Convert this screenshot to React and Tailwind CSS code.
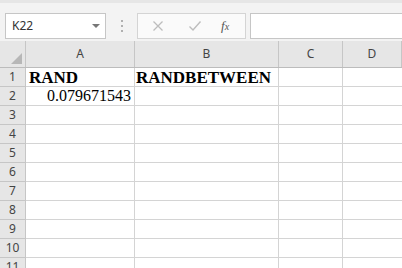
const cols = [
    { name: "A", w: "w-[109px]" },
    { name: "B", w: "w-[144px]" },
    { name: "C", w: "w-[64px]" },
    { name: "D", w: "flex-1" },
];

const rows = [
    { n: 1, a: "RAND", b: "RANDBETWEEN", bold: true },
    { n: 2, a: "0.079671543", b: "", num: true },
    { n: 3 }, { n: 4 }, { n: 5 }, { n: 6 }, { n: 7 }, { n: 8 }, { n: 9 }, { n: 10 }, { n: 11 },
];

const ui = { fontFamily: '"Noto Sans", "Open Sans", sans-serif' };
const serif = { fontFamily: '"Liberation Serif", "DejaVu Serif", serif' };

export default function App() {
    return (
        <div className="w-[402px] h-[268px] overflow-hidden bg-white" style={ui}>
            {/* formula bar */}
            <div className="h-[41px] bg-[#f3f3f3] border-t-[3px] border-t-[#e6e6e6] flex items-start pt-[10px]">
                <div className="ml-[5px] w-[101px] h-[26px] bg-white border border-[#c6c6c6] flex items-center pl-[6px] pr-[5px]">
                    <span className="text-[12px] text-[#333] flex-1">K22</span>
                    <span className="w-0 h-0 border-l-[4px] border-r-[4px] border-t-[4px] border-l-transparent border-r-transparent border-t-[#777]" />
                </div>
                <div className="w-[31px] h-[26px] flex flex-col items-center justify-center gap-[3px]">
                    <span className="w-[2px] h-[2px] bg-[#b0b0b0]" />
                    <span className="w-[2px] h-[2px] bg-[#b0b0b0]" />
                    <span className="w-[2px] h-[2px] bg-[#b0b0b0]" />
                </div>
                <div className="w-[109px] h-[26px] bg-[#fafafa] border border-[#d4d4d4] flex items-center">
                    <svg width="12" height="12" viewBox="0 0 12 12" className="ml-[14px]">
                        <path d="M1.5 1.5 L10.5 10.5 M10.5 1.5 L1.5 10.5" stroke="#bdbdbd" strokeWidth="1.3" fill="none" />
                    </svg>
                    <svg width="14" height="12" viewBox="0 0 14 12" className="ml-[24px]">
                        <path d="M1.5 6.5 L5 10 L12.5 1.5" stroke="#bdbdbd" strokeWidth="1.4" fill="none" />
                    </svg>
                    <span className="ml-[19px] text-[13px] italic text-[#555]" style={serif}>f<span className="text-[10px]">x</span></span>
                </div>
                <div className="ml-[4px] flex-1 h-[26px] bg-white border border-[#c6c6c6] border-r-0" />
            </div>

            {/* column headers */}
            <div className="flex h-[27px] bg-[#e6e6e6] border-b border-[#bcbcbc]">
                <div className="w-[26px] border-r border-[#c6c6c6] flex items-end justify-end pr-[3px] pb-[3px]">
                    <svg width="11" height="11" viewBox="0 0 11 11">
                        <path d="M11 0 L11 11 L0 11 Z" fill="#b7b7b7" />
                    </svg>
                </div>
                {cols.map((c) => (
                    <div key={c.name} className={`${c.w} border-r border-[#c6c6c6] flex items-center justify-center text-[12px] text-[#444]`}>
                        {c.name}
                    </div>
                ))}
            </div>

            {/* rows */}
            {rows.map((r) => (
                <div key={r.n} className="flex h-[19px]">
                    <div className="w-[26px] bg-[#e6e6e6] border-r border-b border-[#c6c6c6] flex items-center justify-center text-[12px] text-[#444]">
                        {r.n}
                    </div>
                    <div className={`w-[109px] border-r border-b border-[#d4d4d4] flex items-center ${r.num ? "justify-end pr-[3px]" : "pl-[3px]"} ${r.bold ? "font-bold text-[17px]" : "text-[16px]"} text-black leading-none`} style={serif}>
                        {r.a}
                    </div>
                    <div className={`w-[144px] border-r border-b border-[#d4d4d4] flex items-center pl-[1px] ${r.bold ? "font-bold text-[17px]" : "text-[16px]"} text-black leading-none`} style={serif}>
                        {r.b}
                    </div>
                    <div className="w-[64px] border-r border-b border-[#d4d4d4]" />
                    <div className="flex-1 border-b border-[#d4d4d4]" />
                </div>
            ))}
        </div>
    );
}
